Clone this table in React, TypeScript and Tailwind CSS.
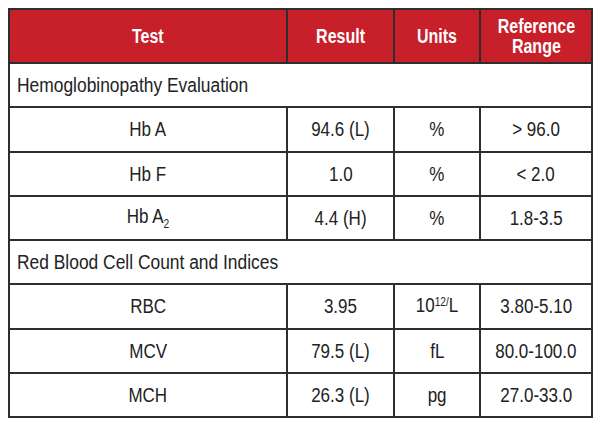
import React from "react";

const font = { fontFamily: '"Liberation Sans", Arial, sans-serif' };

type Row = { test: React.ReactNode; result: string; units: React.ReactNode; range: string };

function N({ children, left = false }: { children: React.ReactNode; left?: boolean }) {
  return (
    <span
      className={
        left
          ? "inline-block whitespace-nowrap scale-x-[0.87] origin-left"
          : "inline-block whitespace-nowrap scale-x-[0.85] origin-center"
      }
    >
      {children}
    </span>
  );
}

const section1: Row[] = [
  { test: "Hb A", result: "94.6 (L)", units: "%", range: "> 96.0" },
  { test: "Hb F", result: "1.0", units: "%", range: "< 2.0" },
  {
    test: (
      <>
        Hb A<span className="text-[12px] relative top-[5px]">2</span>
      </>
    ),
    result: "4.4 (H)",
    units: "%",
    range: "1.8-3.5",
  },
];

const section2: Row[] = [
  {
    test: "RBC",
    result: "3.95",
    units: (
      <>
        10<span className="text-[12px] relative -top-[6px]">12/</span>L
      </>
    ),
    range: "3.80-5.10",
  },
  { test: "MCV", result: "79.5 (L)", units: "fL", range: "80.0-100.0" },
  { test: "MCH", result: "26.3 (L)", units: "pg", range: "27.0-33.0" },
];

const cell = "border-2 border-[#2e2e2e] text-center text-[20px] leading-[22px] text-[#222] p-0";

function DataRows({ rows }: { rows: Row[] }) {
  return (
    <>
      {rows.map((r, i) => (
        <tr key={i} className="h-[44.25px]">
          <td className={cell}><N>{r.test}</N></td>
          <td className={cell}><N>{r.result}</N></td>
          <td className={cell}><N>{r.units}</N></td>
          <td className={cell}><N>{r.range}</N></td>
        </tr>
      ))}
    </>
  );
}

function Section({ title }: { title: string }) {
  return (
    <tr className="h-[44.25px]">
      <td
        colSpan={4}
        className="border-2 border-[#2e2e2e] pl-[7px] text-left text-[20px] leading-[22px] text-[#222]"
      >
        <N left>{title}</N>
      </td>
    </tr>
  );
}

const th = "border-2 border-[#2e2e2e] p-0 text-center";

function H({ children }: { children: React.ReactNode }) {
  return (
    <span className="inline-block whitespace-nowrap text-center scale-x-[0.8] origin-center">{children}</span>
  );
}

export default function App() {
  return (
    <div className="w-[600px] h-[426px] bg-white pt-[8px] pl-[8px]" style={font}>
      <table className="border-collapse w-[583px] table-fixed">
        <colgroup>
          <col className="w-[278px]" />
          <col className="w-[107px]" />
          <col className="w-[86px]" />
          <col className="w-[112px]" />
        </colgroup>
        <thead>
          <tr className="h-[54px] bg-[#c8202b] text-white font-bold text-[20px] leading-[20px]">
            <th className={th}><H>Test</H></th>
            <th className={th}><H>Result</H></th>
            <th className={th}><H>Units</H></th>
            <th className={th}>
              <H>
                Reference
                <br />
                Range
              </H>
            </th>
          </tr>
        </thead>
        <tbody>
          <Section title="Hemoglobinopathy Evaluation" />
          <DataRows rows={section1} />
          <Section title="Red Blood Cell Count and Indices" />
          <DataRows rows={section2} />
        </tbody>
      </table>
    </div>
  );
}
